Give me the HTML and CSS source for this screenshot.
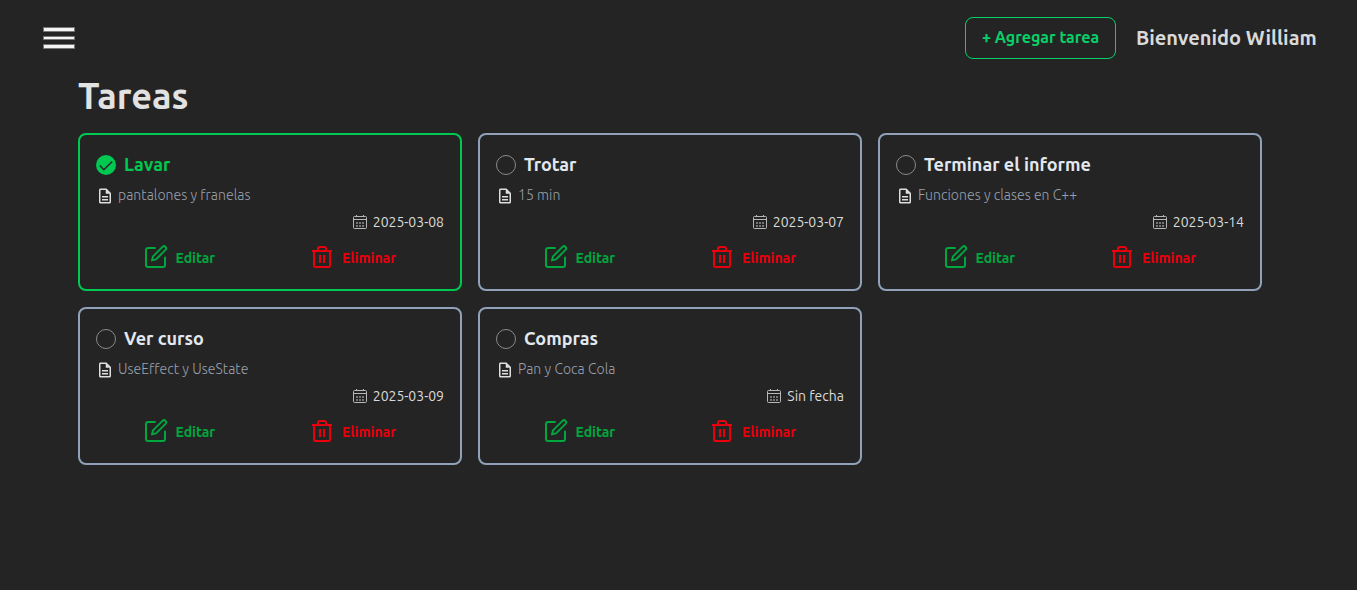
FILE: index.html
```html
<!DOCTYPE html>
<html lang="es">
<head>
<meta charset="utf-8">
<title>Tareas</title>
<link rel="stylesheet" href="styles.css">
</head>
<body>
<svg class="sprite" aria-hidden="true">
  <symbol id="doc" viewBox="0 0 24 24"><path fill="currentColor" d="M8 16h8v2H8zm0-4h8v2H8zm6-10H6c-1.100 0-2 .9-2 2v16c0 1.100.89 2 1.990 2H18c1.100 0 2-.9 2-2V8zm4 18H6V4h7v5h5z"/></symbol>
  <symbol id="cal" viewBox="0 0 14 14"><path fill="none" stroke="currentColor" d="M1.500 1.500h11a1 1 0 0 1 1 1v10a1 1 0 0 1-1 1h-11a1 1 0 0 1-1-1v-10a1 1 0 0 1 1-1zM.5 4.500h13M3.500 0v2M10.500 0v2"/><path fill="none" stroke="currentColor" stroke-width="2" stroke-dasharray="2 1" opacity=".55" d="M3 8h8M3 11h8"/></symbol>
  <symbol id="edit" viewBox="0 0 24 24"><path fill="none" stroke="currentColor" stroke-width="2" stroke-linecap="round" stroke-linejoin="round" d="M11 3H4a2 2 0 0 0-2 2v15a2 2 0 0 0 2 2h15a2 2 0 0 0 2-2v-7.500M18.500 1.900a2.120 2.120 0 0 1 3 3L12 14.400l-4 1 1-4z"/></symbol>
  <symbol id="trash" viewBox="0 0 24 24"><path fill="none" stroke="currentColor" stroke-width="2" d="M2 6h20M4 6v14.500a1.500 1.500 0 0 0 1.500 1.500h13a1.500 1.500 0 0 0 1.500-1.500V6M8 6V3.500A1.500 1.500 0 0 1 9.500 2h5A1.500 1.500 0 0 1 16 3.500V6M10 10v8M14 10v8"/></symbol>
  <symbol id="open" viewBox="0 0 20 20"><circle cx="10" cy="10" r="9.500" fill="none" stroke="#8a8a8a"/></symbol>
  <symbol id="done" viewBox="0 0 20 20"><circle cx="10" cy="10" r="10" fill="#00c951"/><path d="M3.800 10.600 7.800 14.700 16.200 6.500" fill="none" stroke="#242424" stroke-width="1.500"/></symbol>
</svg>
<header class="topbar">
  <button class="menu" aria-label="Menú"><svg width="32" height="22" viewBox="0 0 32 22"><path fill="#f4f4f4" stroke="#777" d="M.5.5h31v4H.5zM.5 9.500h31v3H.5zM.5 17.500h31v4H.5z"/></svg></button>
  <div class="user">
    <button class="add">+ Agregar tarea</button>
    <span class="welcome">Bienvenido William</span>
  </div>
</header>
<main class="content">
  <h1 class="heading">Tareas</h1>
  <section class="grid">
    <article class="card card-done">
      <h2 class="title"><svg class="i20"><use href="#done"/></svg><span>Lavar</span></h2>
      <p class="desc"><svg class="i18"><use href="#doc"/></svg><span>pantalones y franelas</span></p>
      <p class="date"><svg class="i14"><use href="#cal"/></svg><span>2025-03-08</span></p>
      <div class="actions"><button class="edit"><svg class="i24"><use href="#edit"/></svg><span>Editar</span></button><button class="delete"><svg class="i24"><use href="#trash"/></svg><span>Eliminar</span></button></div>
    </article>
    <article class="card">
      <h2 class="title"><svg class="i20"><use href="#open"/></svg><span>Trotar</span></h2>
      <p class="desc"><svg class="i18"><use href="#doc"/></svg><span>15 min</span></p>
      <p class="date"><svg class="i14"><use href="#cal"/></svg><span>2025-03-07</span></p>
      <div class="actions"><button class="edit"><svg class="i24"><use href="#edit"/></svg><span>Editar</span></button><button class="delete"><svg class="i24"><use href="#trash"/></svg><span>Eliminar</span></button></div>
    </article>
    <article class="card">
      <h2 class="title"><svg class="i20"><use href="#open"/></svg><span>Terminar el informe</span></h2>
      <p class="desc"><svg class="i18"><use href="#doc"/></svg><span>Funciones y clases en C++</span></p>
      <p class="date"><svg class="i14"><use href="#cal"/></svg><span>2025-03-14</span></p>
      <div class="actions"><button class="edit"><svg class="i24"><use href="#edit"/></svg><span>Editar</span></button><button class="delete"><svg class="i24"><use href="#trash"/></svg><span>Eliminar</span></button></div>
    </article>
    <article class="card">
      <h2 class="title"><svg class="i20"><use href="#open"/></svg><span>Ver curso</span></h2>
      <p class="desc"><svg class="i18"><use href="#doc"/></svg><span>UseEffect y UseState</span></p>
      <p class="date"><svg class="i14"><use href="#cal"/></svg><span>2025-03-09</span></p>
      <div class="actions"><button class="edit"><svg class="i24"><use href="#edit"/></svg><span>Editar</span></button><button class="delete"><svg class="i24"><use href="#trash"/></svg><span>Eliminar</span></button></div>
    </article>
    <article class="card">
      <h2 class="title"><svg class="i20"><use href="#open"/></svg><span>Compras</span></h2>
      <p class="desc"><svg class="i18"><use href="#doc"/></svg><span>Pan y Coca Cola</span></p>
      <p class="date"><svg class="i14"><use href="#cal"/></svg><span>Sin fecha</span></p>
      <div class="actions"><button class="edit"><svg class="i24"><use href="#edit"/></svg><span>Editar</span></button><button class="delete"><svg class="i24"><use href="#trash"/></svg><span>Eliminar</span></button></div>
    </article>
  </section>
</main>
</body>
</html>
```
FILE: styles.css
```css
* { box-sizing: border-box; margin: 0; padding: 0; }
body { min-height: 100vh; background: #242424; color: #dadada; font-family: Ubuntu, "Noto Sans", sans-serif; }
button { font: inherit; color: inherit; background: none; border: 0; }
svg { display: block; flex: none; }
span { white-space: nowrap; }
.sprite { display: none; }
.topbar { height: 76px; padding: 0 40px 0 43px; display: flex; align-items: center; justify-content: space-between; }
.user { display: flex; align-items: center; gap: 20px; }
.add { width: 151px; height: 42px; padding-bottom: 2px; border: 1px solid #08d069; border-radius: 8px; color: #08d069; font-size: 16px; font-weight: 600; white-space: nowrap; }
.welcome { width: 181px; padding-bottom: 2px; font-size: 20px; font-weight: 600; }
.content { padding: 0 95px 0 78px; }
.heading { height: 57px; font-size: 36px; line-height: 40px; font-weight: 600; color: #e2e2e2; }
.grid { display: grid; grid-template-columns: repeat(3, 384px); gap: 16px; }
.card { height: 158px; border: 2px solid #90a1b9; border-radius: 8px; padding: 16px; }
.card-done { border-color: #00c951; }
.title { height: 28px; display: flex; align-items: center; gap: 8px; font-size: 18px; font-weight: 600; color: #e2e8f0; }
.title span { padding-bottom: 2px; }
.card-done .title { color: #00c951; }
.desc { height: 20px; margin-top: 6px; display: flex; align-items: center; gap: 4px; font-size: 14px; font-weight: 340; letter-spacing: .04px; color: #99a1af; }
.desc svg { color: #dedede; margin-top: 2px; }
.date { height: 20px; margin-top: 7px; display: flex; align-items: center; justify-content: flex-end; gap: 6px; font-size: 14px; font-weight: 400; }
.date svg { color: #b8b8b8; }
.actions { height: 32px; margin-top: 9px; padding-left: 48px; display: grid; grid-template-columns: 166px 1fr; font-size: 14px; font-weight: 600; }
.actions span { padding-top: 2px; }
.edit, .delete { display: flex; align-items: center; gap: 8px; }
.edit { color: #00a63e; gap: 7.5px; }
.delete { color: #e7000b; }
.i14 { width: 14px; height: 14px; }
.i18 { width: 18px; height: 18px; }
.i20 { width: 20px; height: 20px; }
.i24 { width: 24px; height: 24px; }
```
